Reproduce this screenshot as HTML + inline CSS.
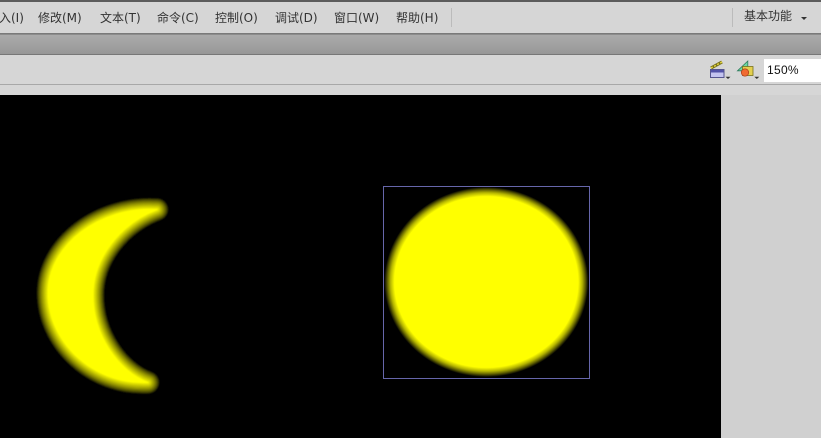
<!DOCTYPE html>
<html>
<head>
<meta charset="utf-8">
<style>
html,body{margin:0;padding:0;background:#000}
#p{position:relative;width:821px;height:438px;overflow:hidden;background:#d0d0d0;font-family:"DejaVu Sans","Noto Sans CJK SC",sans-serif;font-size:12px;color:#333}
#p div,#p span{position:absolute}
#p span{white-space:nowrap;top:10px;line-height:17px}
</style>
</head>
<body>
<div id="p">
<div style="left:0;top:0;width:821px;height:34px;background:#d6d6d6"></div>
<div style="left:0;top:0;width:821px;height:2px;background:#5c5c5c"></div>
<div style="left:0;top:33px;width:821px;height:1px;background:#7a7a7a"></div>
<div style="left:0;top:34px;width:821px;height:1px;background:#8c8c8c"></div>
<div style="left:0;top:35px;width:821px;height:19px;background:linear-gradient(#ababab,#979797)"></div>
<div style="left:0;top:54px;width:821px;height:1px;background:#777"></div>
<div style="left:0;top:55px;width:821px;height:40px;background:#d6d6d6"></div>
<div style="left:0;top:84px;width:821px;height:1px;background:#a8a8a8"></div>
<span style="left:-1px">入(I)</span>
<span style="left:38px">修改(M)</span>
<span style="left:100px">文本(T)</span>
<span style="left:157px">命令(C)</span>
<span style="left:215px">控制(O)</span>
<span style="left:275px">调试(D)</span>
<span style="left:334px">窗口(W)</span>
<span style="left:396px">帮助(H)</span>
<div style="left:451px;top:8px;width:1px;height:19px;background:#bbb"></div>
<div style="left:732px;top:8px;width:1px;height:19px;background:#bbb"></div>
<span style="left:744px;top:8px">基本功能</span>
<div style="left:764px;top:59px;width:57px;height:23px;background:#fff"></div>
<span style="left:767px;top:62px;color:#111;font-family:'Liberation Sans',sans-serif;letter-spacing:.3px">150%</span>
<div style="left:0;top:95px;width:721px;height:343px;background:#000"></div>
<svg width="821" height="438" viewBox="0 0 821 438" style="position:absolute;left:0;top:0">
<defs>
<filter id="s" x="-15%" y="-15%" width="130%" height="130%"><feGaussianBlur stdDeviation="0.500"/></filter>
<radialGradient id="g" gradientUnits="userSpaceOnUse" cx="0" cy="0" r="1" gradientTransform="translate(486.300 282) scale(102 95)">
<stop offset="0" stop-color="#ff0"/>
<stop offset=".90" stop-color="#ff0"/>
<stop offset=".94" stop-color="#b4b400"/>
<stop offset=".97" stop-color="#606000"/>
<stop offset="1" stop-color="#000"/>
</radialGradient>
<path id="m" d="M157 209.500C100 206 48 245 48 293C48 341 92 385 148 382.500C118 371 93 335 93 295C93 258 120 224 157 209.500Z"/>
</defs>
<path d="M801 17h6l-3 3z" fill="#333"/>
<!-- clapper icon -->
<path d="M711 68l11-6" stroke="#77701c" stroke-width="3.200"/>
<path d="M711 68l11-6" stroke="#e8d840" stroke-width="1.400" stroke-dasharray="2 1.500"/>
<rect x="710.500" y="69.500" width="13.500" height="8" fill="#c4c4f0" stroke="#55558e"/>
<rect x="711" y="70" width="12.500" height="2.500" fill="#5252a8"/>
<path d="M725.500 76.800h5l-2.500 2.200z" fill="#333"/>
<!-- shapes icon -->
<path d="M737.500 70.800l10.300-9.800v9.800z" fill="#6ed8a4" stroke="#2f7a5c" stroke-width=".8"/>
<rect x="742.500" y="66.500" width="10.500" height="9" fill="#e4d050" stroke="#77701c" stroke-width=".8"/>
<circle cx="745" cy="72.500" r="3.700" fill="#f06a30" stroke="#a83c18" stroke-width=".7"/>
<path d="M754.300 76.800h5l-2.500 2.200z" fill="#333"/>
<!-- crescent: stacked falloff layers -->
<g filter="url(#s)" stroke-linejoin="round">
<use href="#m" fill="#1b1b00" stroke="#1b1b00" stroke-width="23"/>
<use href="#m" fill="#3b3b00" stroke="#3b3b00" stroke-width="21"/>
<use href="#m" fill="#555500" stroke="#555500" stroke-width="19"/>
<use href="#m" fill="#6b6b00" stroke="#6b6b00" stroke-width="17"/>
<use href="#m" fill="#808000" stroke="#808000" stroke-width="15"/>
<use href="#m" fill="#949400" stroke="#949400" stroke-width="13"/>
<use href="#m" fill="#a6a600" stroke="#a6a600" stroke-width="11"/>
<use href="#m" fill="#b7b700" stroke="#b7b700" stroke-width="9"/>
<use href="#m" fill="#c9c900" stroke="#c9c900" stroke-width="7"/>
<use href="#m" fill="#d9d900" stroke="#d9d900" stroke-width="5"/>
<use href="#m" fill="#e8e800" stroke="#e8e800" stroke-width="3"/>
<use href="#m" fill="#ffff00" stroke="#ffff00" stroke-width="1"/>
</g>
<!-- circle -->
<ellipse cx="486.300" cy="282" rx="102" ry="95" fill="url(#g)"/>
<rect x="383.500" y="186.500" width="206" height="192" fill="none" stroke="#6666aa" stroke-width="1"/>
</svg>
</div>
</body>
</html>
